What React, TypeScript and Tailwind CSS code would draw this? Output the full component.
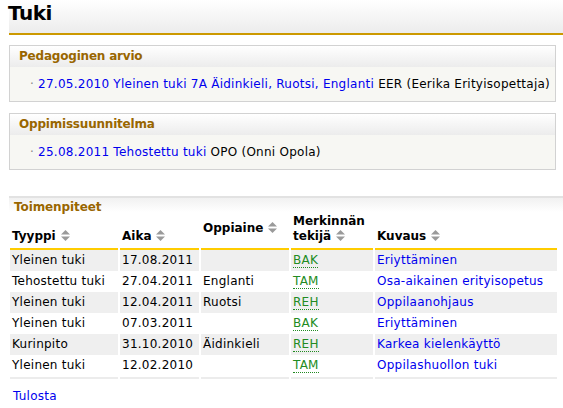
import React from 'react'

type Row = {
  type: string
  date: string
  subject: string
  by: string
  desc: string
}

const rows: Row[] = [
  { type: 'Yleinen tuki', date: '17.08.2011', subject: '', by: 'BAK', desc: 'Eriyttäminen' },
  { type: 'Tehostettu tuki', date: '27.04.2011', subject: 'Englanti', by: 'TAM', desc: 'Osa-aikainen erityisopetus' },
  { type: 'Yleinen tuki', date: '12.04.2011', subject: 'Ruotsi', by: 'REH', desc: 'Oppilaanohjaus' },
  { type: 'Yleinen tuki', date: '07.03.2011', subject: '', by: 'BAK', desc: 'Eriyttäminen' },
  { type: 'Kurinpito', date: '31.10.2010', subject: 'Äidinkieli', by: 'REH', desc: 'Karkea kielenkäyttö' },
  { type: 'Yleinen tuki', date: '12.02.2010', subject: '', by: 'TAM', desc: 'Oppilashuollon tuki' },
]

function SortIcon() {
  return (
    <svg width="9" height="11" viewBox="0 0 9 11" className="inline-block ml-[5px] align-[-1px]">
      <path d="M4.5 0 L9 4.5 L0 4.5 Z" fill="#9a9a9a" />
      <path d="M0 6.5 L9 6.5 L4.5 11 Z" fill="#9a9a9a" />
    </svg>
  )
}

function Box({ title, children }: { title: string; children: React.ReactNode }) {
  return (
    <div className="border border-[#d2d2d2] mr-[7px]">
      <div className="h-[21px] pl-[9px] pt-[3px] bg-gradient-to-b from-white to-[#ececec] text-[#996600] font-bold tracking-[-0.2px]">
        {title}
      </div>
      <div className="bg-[#f7f7f3] h-[34px] pl-[20px] pt-[10px]">{children}</div>
    </div>
  )
}

export default function App() {
  return (
    <div className="w-[563px] h-[408px] bg-white pl-[9px] text-[12px] leading-[15px] tracking-[0.25px] text-black overflow-hidden font-['DejaVu_Sans',sans-serif]">
      <div className="h-[35px] bg-gradient-to-b from-white to-[#ececec] border-b-2 border-[#cc9900]">
        <h1 className="text-[20px] leading-[24px] font-bold pt-[1px] -ml-[1px] tracking-[-0.5px]">Tuki</h1>
      </div>

      <div className="mt-[10px]">
        <Box title="Pedagoginen arvio">
          <span className="text-[#888] mr-[4px]">·</span>
          <span className="text-[#0000ee]">27.05.2010 Yleinen tuki 7A Äidinkieli, Ruotsi, Englanti</span>{' '}
          EER (Eerika Erityisopettaja)
        </Box>
      </div>

      <div className="mt-[11px]">
        <Box title="Oppimissuunnitelma">
          <span className="text-[#888] mr-[4px]">·</span>
          <span className="text-[#0000ee]">25.08.2011 Tehostettu tuki</span> OPO (Onni Opola)
        </Box>
      </div>

      <div className="mt-[26px] border-t-2 border-[#e2e2e2] bg-gradient-to-b from-[#f1f1f1] to-white h-[16px] pl-[5px] pt-[2px] text-[#996600] font-bold tracking-[-0.1px]">
        Toimenpiteet
      </div>

      <table className="border-separate border-spacing-x-[2px] border-spacing-y-0 -ml-[1px] w-[551px]">
        <thead>
          <tr className="font-bold tracking-[0px]">
            <th className="text-left align-bottom h-[38px] pl-[2px] pb-[4px] border-b-2 border-[#ffcc00] w-[108px]">
              Tyyppi<SortIcon />
            </th>
            <th className="text-left align-bottom pl-[2px] pb-[4px] border-b-2 border-[#ffcc00] w-[79px]">
              Aika<SortIcon />
            </th>
            <th className="text-left align-middle pl-[2px] pb-[4px] border-b-2 border-[#ffcc00] w-[88px]">
              Oppiaine<SortIcon />
            </th>
            <th className="text-left align-bottom pl-[2px] pb-[4px] border-b-2 border-[#ffcc00] w-[82px]">
              Merkinnän
              <br />
              tekijä<SortIcon />
            </th>
            <th className="text-left align-bottom pl-[2px] pb-[4px] border-b-2 border-[#ffcc00]">
              Kuvaus<SortIcon />
            </th>
          </tr>
        </thead>
        <tbody>
          {rows.map((r, i) => (
            <tr key={i} className={i % 2 === 0 ? 'bg-[#efefef]' : 'bg-white'}>
              <td className="h-[21px] pl-[2px]">{r.type}</td>
              <td className="pl-[2px]">{r.date}</td>
              <td className="pl-[2px]">{r.subject}</td>
              <td className="pl-[2px]">
                <span className="text-[#228b22] border-b border-dotted border-[#228b22]">{r.by}</span>
              </td>
              <td className="pl-[2px] text-[#0000ee]">{r.desc}</td>
            </tr>
          ))}
          <tr>
            <td className="h-[3px] bg-[#ececec] border-t border-white"></td>
            <td className="bg-[#ececec] border-t border-white"></td>
            <td className="bg-[#ececec] border-t border-white"></td>
            <td className="bg-[#ececec] border-t border-white"></td>
            <td className="bg-[#ececec] border-t border-white"></td>
          </tr>
        </tbody>
      </table>

      <div className="mt-[10px] pl-[4px] text-[#0000ee]">Tulosta</div>
    </div>
  )
}
